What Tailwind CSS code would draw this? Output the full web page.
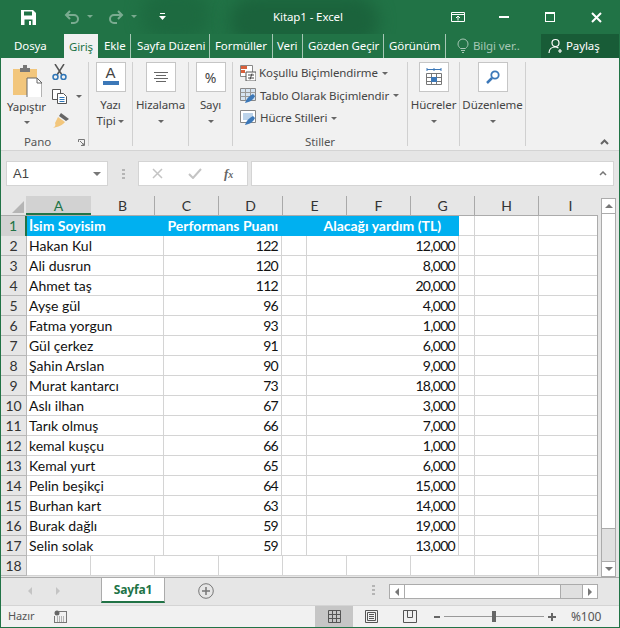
<!DOCTYPE html>
<html lang="tr">
<head>
<meta charset="UTF-8">
<title>Kitap1 - Excel</title>
<script src="https://cdn.jsdelivr.net/npm/@tailwindcss/browser@4"></script>
</head>
<body class="w-[620px] h-[628px] overflow-hidden bg-[#e6e6e6] font-['Noto_Sans',sans-serif] text-[11.500px] tracking-[-0.1px] text-[#444]">
<div class="h-[628px] flex flex-col border-x border-b border-[#217346]">

  <!-- title bar -->
  <header class="relative h-[34px] flex items-center bg-[#217346] text-white overflow-hidden">
    <div class="absolute left-[140px] top-[-10px] w-[70px] h-[50px] rounded-full bg-[#1d6a40] blur-sm"></div>
    <div class="absolute left-[228px] top-[-4px] w-[150px] h-[50px] rounded-full bg-[#1b633c] blur-sm"></div>
    <div class="relative w-[618px] flex items-center h-full">
      <svg class="ml-[20px]" width="15" height="15" viewBox="0 0 15 15"><path d="M0 0h12l3 3v12H0z" fill="#fff"/><path d="M3 1.500h8v4H3zM3.500 9.500h8V15h-8z" fill="#217346"/><path d="M8 11h2v4H8z" fill="#fff"/></svg>
      <svg class="ml-[28px] opacity-40" width="16" height="15" viewBox="0 0 16 15" fill="none" stroke="#fff" stroke-width="2"><path d="M6 1 2 5l4 4M2 5h8a4 4 0 0 1 0 8H7"/></svg>
      <svg class="ml-[7px] opacity-40" width="6" height="4" viewBox="0 0 6 4"><path d="M0 0h6L3 3z" fill="#fff"/></svg>
      <svg class="ml-[15px] opacity-40" width="16" height="15" viewBox="0 0 16 15" fill="none" stroke="#fff" stroke-width="2"><path d="m10 1 4 4-4 4M14 5H6a4 4 0 0 0 0 8h3"/></svg>
      <svg class="ml-[7px] opacity-40" width="6" height="4" viewBox="0 0 6 4"><path d="M0 0h6L3 3z" fill="#fff"/></svg>
      <svg class="ml-[22px]" width="7" height="8" viewBox="0 0 7 8"><path d="M1 0h5v1H1zM0 3h7L3.500 7z" fill="#fff"/></svg>
      <span class="ml-[107px] w-[90px] text-[#fff] whitespace-nowrap">Kitap1 - Excel</span>
      <svg class="ml-[88px]" width="14" height="12" viewBox="0 0 14 12" fill="none" stroke="#fff"><path d="M.5 1.500h13v9H.5zM.5 3.500h13"/><path d="M7 9.500V5.500M5 7l2-2 2 2"/></svg>
      <span class="ml-[34px] w-[10px] h-[2px] bg-white"></span>
      <span class="ml-[36px] w-[10px] h-[10px] border border-white border-t-2"></span>
      <svg class="ml-[36px]" width="11" height="11" viewBox="0 0 11 11" stroke="#fff" stroke-width="2"><path d="m1 1 9 9M10 1l-9 9"/></svg>
    </div>
  </header>

  <!-- ribbon tabs -->
  <nav class="h-[24px] flex items-stretch bg-[#217346] text-white whitespace-nowrap">
    <span class="ml-[13px] w-[50px] leading-[24px]">Dosya</span>
    <span class="w-[34px] bg-[#f1f1f1] text-[#217346] text-center leading-[25px]">Giriş</span>
    <span class="ml-[6px] w-[27px] leading-[24px] border-r border-[#a6c7b5]">Ekle</span>
    <span class="ml-[6px] w-[73px] leading-[24px] border-r border-[#a6c7b5]">Sayfa Düzeni</span>
    <span class="ml-[5px] w-[58px] leading-[24px] border-r border-[#a6c7b5]">Formüller</span>
    <span class="ml-[4px] w-[26px] leading-[24px] border-r border-[#a6c7b5]">Veri</span>
    <span class="ml-[5px] w-[76px] leading-[24px] border-r border-[#a6c7b5]">Gözden Geçir</span>
    <span class="ml-[5px] w-[57px] leading-[24px] border-r border-[#a6c7b5]">Görünüm</span>
    <svg class="ml-[11px] mt-[4px]" width="12" height="16" viewBox="0 0 12 16" fill="none" stroke="#a6c7b5"><path d="M3.500 10.500C2 9 1 8 1 6a5 5 0 0 1 10 0c0 2-1 3-2.500 4.500zM4 12.500h4M5 14.500h2"/></svg>
    <span class="ml-[4px] w-[68px] leading-[24px] text-[#a6c7b5]">Bilgi ver..</span>
    <span class="w-[78px] bg-[#185c37] flex items-center pl-[7px] gap-[2px]">
      <svg width="16" height="16" viewBox="0 0 16 16" fill="none" stroke="#fff" stroke-width="1.200"><circle cx="7.500" cy="5" r="3.500"/><path d="M1 15c0-4 3-6 6.500-6 1.500 0 2 .5 3 1M12 11v4M10 13h4"/></svg>
      Paylaş
    </span>
  </nav>

  <!-- ribbon -->
  <section class="h-[93px] flex items-stretch bg-[#f1f1f1] border-b border-[#d4d4d4] pt-[4px] pb-[4px] relative">
    <div class="w-[88px] flex flex-col border-r border-[#d0d0d0]">
      <div class="h-[73px] shrink-0 flex">
        <div class="w-[45px] ml-[3px] flex flex-col items-center">
          <svg class="mt-[3px]" width="30" height="32" viewBox="0 0 30 32"><path d="M1 4h24v26H1z" fill="#f2c67c"/><path d="M8 3h3V0h4v3h3v4H8z" fill="#777"/><path d="M15 13h10l5 5v15H15z" fill="#fff" stroke="#666"/><path d="M25 13v5h5" fill="none" stroke="#666"/></svg>
          <span class="mt-[2px] leading-[16px] whitespace-nowrap">Yapıştır</span>
          <span class="mt-[6px] border-x-[3px] border-t-[3px] border-x-transparent border-t-[#666]"></span>
        </div>
        <div class="flex flex-col gap-[9px] ml-[3px] pt-[2px]">
          <svg width="15" height="16" viewBox="0 0 15 16" fill="none"><path d="m3 0 7 11M12 0 5 11" stroke="#555" stroke-width="1.500"/><circle cx="3.500" cy="13" r="2.500" stroke="#2e75b6" stroke-width="1.500"/><circle cx="11.500" cy="13" r="2.500" stroke="#2e75b6" stroke-width="1.500"/></svg>
          <div class="flex items-center gap-[8px]">
            <svg width="16" height="15" viewBox="0 0 16 15" fill="#fff" stroke="#555"><path d="M.5.500h8v10h-8z"/><path d="M5.500 4.500h6l3 3v7h-9z"/><path d="M7.500 8.500h5M7.500 10.500h5M7.500 12.500h5" stroke="#2e75b6"/></svg>
            <span class="border-x-[3px] border-t-[3px] border-x-transparent border-t-[#666]"></span>
          </div>
          <svg width="17" height="15" viewBox="0 0 17 15"><path d="m9 0 8 6-3 2-7-5z" fill="#666"/><path d="M6 4 13 9c-2 3-7 5-12 6 2-1 3-3 2-5z" fill="#f2c67c"/></svg>
        </div>
      </div>
      <div class="flex items-center h-[14px] shrink-0">
        <span class="ml-[23px] w-[54px] text-[#555]">Pano</span>
        <svg width="7" height="7" viewBox="0 0 7 7" fill="none" stroke="#777"><path d="M.5 3V.5H6.500V6.500H3M2 2l4 4M4 6h2V4"/></svg>
      </div>
    </div>
    <div class="w-[44px] flex flex-col items-center border-r border-[#d0d0d0]">
      <div class="w-[30px] h-[30px] bg-white border border-[#c6c6c6] flex flex-col items-center pt-[2px]">
        <span class="font-['Liberation_Sans',sans-serif] text-[15px] leading-[16px] text-[#444]">A</span>
        <span class="w-[16px] h-[4px] bg-[#3c78b8]"></span>
      </div>
      <span class="mt-[5px] leading-[16px]">Yazı</span>
      <span class="leading-[16px] whitespace-nowrap">Tipi <span class="inline-block align-middle border-x-[3px] border-t-[3px] border-x-transparent border-t-[#666]"></span></span>
    </div>
    <div class="w-[56px] flex flex-col items-center border-r border-[#d0d0d0]">
      <div class="w-[30px] h-[30px] bg-white border border-[#c6c6c6] flex flex-col items-center justify-center gap-[2px]">
        <span class="w-[14px] h-px bg-[#666]"></span><span class="w-[10px] h-px bg-[#666]"></span><span class="w-[14px] h-px bg-[#666]"></span><span class="w-[10px] h-px bg-[#666]"></span>
      </div>
      <span class="mt-[5px] leading-[16px]">Hizalama</span>
      <span class="mt-[7px] border-x-[3px] border-t-[3px] border-x-transparent border-t-[#666]"></span>
    </div>
    <div class="w-[44px] flex flex-col items-center border-r border-[#d0d0d0]">
      <div class="w-[30px] h-[30px] bg-white border border-[#c6c6c6] flex items-center justify-center text-[14px] text-[#444]">%</div>
      <span class="mt-[5px] leading-[16px]">Sayı</span>
      <span class="mt-[7px] border-x-[3px] border-t-[3px] border-x-transparent border-t-[#666]"></span>
    </div>
    <div class="w-[175px] flex flex-col border-r border-[#d0d0d0]">
      <div class="pl-[7px] flex items-center gap-[3px] h-[22px] whitespace-nowrap">
        <svg width="16" height="16" viewBox="0 0 16 16"><path d="M.5.500h12v11H.5z" fill="#fff" stroke="#888"/><path d="M1 1h6v3H1z" fill="#d9603b"/><path d="M1 5h4v3H1z" fill="#d9603b"/><path d="M6 7h10v9H6z" fill="#fff" stroke="#555"/><path d="M8 10h6M8 13h6M12 8.500 10 14.500" stroke="#444" fill="none"/></svg>
        <span>Koşullu Biçimlendirme</span><span class="ml-[1px] border-x-[3px] border-t-[3px] border-x-transparent border-t-[#666]"></span>
      </div>
      <div class="pl-[7px] flex items-center gap-[3px] h-[23px] whitespace-nowrap">
        <svg width="17" height="16" viewBox="0 0 17 16"><path d="M.5.500h15v12H.5z" fill="#d5e3f1" stroke="#888"/><path d="M.5 4.500h15M.5 8.500h15M5.500.5v12M10.500.5v12" stroke="#999" fill="none"/><path d="M5 15c1-4 4-7 8-9l2 2c-2 4-5 6-10 7z" fill="#3c78b8"/></svg>
        <span>Tablo Olarak Biçimlendir</span><span class="ml-[1px] border-x-[3px] border-t-[3px] border-x-transparent border-t-[#666]"></span>
      </div>
      <div class="pl-[7px] flex items-center gap-[3px] h-[22px] whitespace-nowrap">
        <svg width="17" height="16" viewBox="0 0 17 16"><path d="M.5.500h15v12H.5z" fill="#fff" stroke="#888"/><path d="M3 3h10v7H3z" fill="#bcd3ea"/><path d="M5 15c1-4 4-7 8-9l2 2c-2 4-5 6-10 7z" fill="#3c78b8"/></svg>
        <span>Hücre Stilleri</span><span class="ml-[1px] border-x-[3px] border-t-[3px] border-x-transparent border-t-[#666]"></span>
      </div>
      <span class="mt-auto mb-[-3px] text-center leading-[14px] text-[#555]">Stiller</span>
    </div>
    <div class="w-[52px] flex flex-col items-center border-r border-[#d0d0d0]">
      <div class="w-[30px] h-[30px] bg-white border border-[#c6c6c6] flex items-center justify-center">
        <svg width="16" height="18" viewBox="0 0 16 18" fill="none"><path d="M1 1.500h14M1 0v3M15 0v3M8 0v3" stroke="#3c78b8"/><path d="M.5 5.500h15v11H.5zM.5 9.500h15M.5 13.500h15M5.500 5.500v11M10.500 5.500v11" stroke="#777"/><path d="M5 9h6v5H5z" fill="#3c78b8"/></svg>
      </div>
      <span class="mt-[5px] leading-[16px]">Hücreler</span>
      <span class="mt-[7px] border-x-[3px] border-t-[3px] border-x-transparent border-t-[#666]"></span>
    </div>
    <div class="w-[66px] flex flex-col items-center border-r border-[#d0d0d0]">
      <div class="w-[30px] h-[30px] bg-white border border-[#c6c6c6] flex items-center justify-center">
        <svg width="14" height="14" viewBox="0 0 14 14" fill="none" stroke="#3c78b8"><circle cx="9" cy="5" r="3.700" stroke-width="1.800"/><path d="m6 8-5 5" stroke-width="2.500"/></svg>
      </div>
      <span class="mt-[5px] leading-[16px]">Düzenleme</span>
      <span class="mt-[7px] border-x-[3px] border-t-[3px] border-x-transparent border-t-[#666]"></span>
    </div>
    <svg class="absolute right-[10px] bottom-[5px]" width="9" height="6" viewBox="0 0 9 6" fill="none" stroke="#666" stroke-width="2"><path d="m1 5 3.500-3.500L8 5"/></svg>
  </section>

  <!-- formula bar -->
  <div class="h-[45px] flex items-center pl-[5px] pr-[5px]">
    <div class="w-[102px] h-[25px] bg-white border border-[#d4d4d4] flex items-center justify-between pl-[6px] pr-[6px] font-['Liberation_Sans',sans-serif] tracking-normal text-[13px] text-[#444]">
      A1 <span class="border-x-[4px] border-t-[4px] border-x-transparent border-t-[#777]"></span>
    </div>
    <div class="ml-[14px] w-[3px] flex flex-col gap-[2px]"><span class="h-[2px] bg-[#b5b5b5]"></span><span class="h-[2px] bg-[#b5b5b5]"></span><span class="h-[2px] bg-[#b5b5b5]"></span></div>
    <div class="ml-[13px] w-[110px] h-[25px] bg-white border border-[#d4d4d4] flex items-center pl-[13px]">
      <svg width="11" height="11" viewBox="0 0 11 11" stroke="#c4c4c4" stroke-width="1.500"><path d="m1 1 9 9M10 1l-9 9"/></svg>
      <svg class="ml-[25px]" width="14" height="11" viewBox="0 0 14 11" fill="none" stroke="#c4c4c4" stroke-width="2"><path d="m1 6 4 4 8-9"/></svg>
      <span class="ml-[22px] font-['Liberation_Serif',serif] italic font-bold text-[13px] text-[#666]">f<span class="text-[10px]">x</span></span>
    </div>
    <div class="ml-[3px] flex-1 h-[25px] bg-white border border-[#d4d4d4] flex items-center justify-end pr-[6px]">
      <svg width="8" height="5" viewBox="0 0 8 5" fill="none" stroke="#777" stroke-width="1.500"><path d="m1 4 3-3 3 3"/></svg>
    </div>
  </div>

  <!-- sheet -->
  <div class="flex-1 relative flex flex-col font-['Lato',sans-serif] text-[14px] tracking-normal text-[#111] min-h-0">
    <div class="h-[19px] flex items-stretch text-center leading-[19px] text-[14px] text-[#333]">
      <span class="w-[25px] flex items-end justify-end pr-[2px] pb-[2px]"><svg width="12" height="12" viewBox="0 0 12 12"><path d="M12 0v12H0z" fill="#b5b5b5"/></svg></span>
      <span class="w-[65px] bg-[#d2d2d2] border-b-2 border-[#217346] text-[#217346]">A</span>
      <span class="w-[64px] border-r border-[#a9a9a9]">B</span>
      <span class="w-[64px] border-r border-[#a9a9a9]">C</span>
      <span class="w-[64px] border-r border-[#a9a9a9]">D</span>
      <span class="w-[64px] border-r border-[#a9a9a9]">E</span>
      <span class="w-[64px] border-r border-[#a9a9a9]">F</span>
      <span class="w-[64px] border-r border-[#a9a9a9]">G</span>
      <span class="w-[64px] border-r border-[#a9a9a9]">H</span>
      <span class="w-[59px] pl-[4px]">I</span>
    </div>
    <div id="grid" class="w-[597px] flex flex-col border-r border-[#ababab]"></div>
    <!-- scrollbar -->
    <div class="absolute right-[3px] top-[2px] w-[15px] h-[379px] flex flex-col bg-[#e0e0e0] border border-[#ababab]">
      <div class="h-[15px] bg-white flex items-center justify-center border-b border-[#ababab]"><span class="border-x-[4px] border-b-[4px] border-x-transparent border-b-[#777]"></span></div>
      <div class="h-[315px] bg-white border-b border-[#ababab]"></div>
      <div class="mt-auto h-[15px] bg-white flex items-center justify-center border-t border-[#ababab]"><span class="border-x-[4px] border-t-[4px] border-x-transparent border-t-[#777]"></span></div>
    </div>
  </div>

  <!-- sheet tabs -->
  <div class="h-[28px] flex border-t border-[#ababab] bg-[#e6e6e6]">
    <span class="ml-[27px] mt-[9px] w-0 h-0 border-y-[4px] border-r-[4px] border-y-transparent border-r-[#c4c4c4]"></span>
    <span class="ml-[24px] mt-[9px] w-0 h-0 border-y-[4px] border-l-[4px] border-y-transparent border-l-[#c4c4c4]"></span>
    <span class="ml-[41px] w-[64px] h-[25px] bg-white border-x border-[#ababab] border-b-[2px] border-b-[#217346] text-center font-bold text-[12px] text-[#217346] leading-[23px]">Sayfa1</span>
    <svg class="ml-[33px] mt-[5px]" width="16" height="16" viewBox="0 0 16 16" fill="none" stroke="#777"><circle cx="8" cy="8" r="7.300"/><path d="M8 4v8M4 8h8" stroke-width="1.500"/></svg>
    <div class="ml-[158px] mt-[7px] w-[3px] flex flex-col gap-[2px]"><span class="h-[2px] bg-[#b5b5b5]"></span><span class="h-[2px] bg-[#b5b5b5]"></span><span class="h-[2px] bg-[#b5b5b5]"></span></div>
    <div class="ml-[14px] mt-[6px] w-[209px] h-[15px] flex border border-[#ababab] bg-[#e0e0e0]">
      <span class="w-[15px] flex items-center justify-center bg-white border-r border-[#ababab]"><span class="border-y-[4px] border-r-[4px] border-y-transparent border-r-[#777]"></span></span>
      <span class="w-[156px] bg-white border-r border-[#ababab]"></span>
      <span class="ml-auto w-[15px] flex items-center justify-center bg-white border-l border-[#ababab]"><span class="border-y-[4px] border-l-[4px] border-y-transparent border-l-[#777]"></span></span>
    </div>
  </div>

  <!-- status bar -->
  <footer class="h-[22px] flex items-center bg-[#f1f1f1] border-t border-[#d4d4d4] text-[11px] text-[#555]">
    <span class="ml-[7px] w-[46px]">Hazır</span>
    <svg width="13" height="13" viewBox="0 0 13 13"><circle cx="3" cy="3" r="2.500" fill="#666"/><path d="M5 1h8v12H0V6h1v6h11V2H5z" fill="#777"/><path d="M3 7h8M3 9h8M3 11h8" stroke="#777" stroke-dasharray="1 1"/></svg>
    <div class="ml-[248px] w-[38px] h-[21px] bg-[#c6c6c6] flex items-center justify-center">
      <svg width="13" height="13" viewBox="0 0 13 13" fill="none" stroke="#555"><path d="M.5.500h12v12H.5zM.5 4.500h12M.5 8.500h12M4.500.5v12M8.500.5v12"/></svg>
    </div>
    <svg class="ml-[12px]" width="13" height="13" viewBox="0 0 13 13" fill="none" stroke="#555"><path d="M.5.500h12v12H.5zM2.500 2.500h8v8h-8zM4 4.500h5M4 6.500h5M4 8.500h5"/></svg>
    <svg class="ml-[25px]" width="14" height="13" viewBox="0 0 14 13" fill="none" stroke="#555"><path d="M.5.500h13v12H.5zM4.500.5v7h5v-7"/></svg>
    <span class="ml-[17px] w-[6px] h-[2px] bg-[#666]"></span>
    <div class="ml-[4px] w-[100px] h-[1px] bg-[#999] relative"><span class="absolute left-[48px] top-[-5px] w-[4px] h-[11px] bg-[#666]"></span></div>
    <svg class="ml-[4px]" width="8" height="8" viewBox="0 0 8 8" stroke="#666" stroke-width="2"><path d="M4 0v8M0 4h8"/></svg>
    <span class="ml-[15px] text-[12px]">%100</span>
  </footer>
</div>

<script>
  const rows = [
    ["Hakan Kul","122","12,000"],["Ali dusrun","120","8,000"],["Ahmet taş","112","20,000"],["Ayşe gül","96","4,000"],
    ["Fatma yorgun","93","1,000"],["Gül çerkez","91","6,000"],["Şahin Arslan","90","9,000"],["Murat kantarcı","73","18,000"],
    ["Aslı ilhan","67","3,000"],["Tarık olmuş","66","7,000"],["kemal kuşçu","66","1,000"],["Kemal yurt","65","6,000"],
    ["Pelin beşikçi","64","15,000"],["Burhan kart","63","14,000"],["Burak dağlı","59","19,000"],["Selin solak","59","13,000"]
  ];
  const head = 'w-[26px] shrink-0 bg-[#e6e6e6] border-r border-b border-[#b8b8b8] text-center text-[14px] text-[#333] leading-[19px]';
  let html = `<div class="h-[21px] flex border-t border-[#ababab]">
    <span class="w-[26px] shrink-0 bg-[#d2d2d2] border-r-2 border-[#217346] text-center text-[14px] text-[#217346] leading-[19px]">1</span>
    <div class="w-[432px] bg-[#00b0f0] text-white font-bold flex leading-[19px]">
      <span class="w-[137px] pl-[2px]">İsim Soyisim</span><span class="w-[118px] text-right pr-[4px] whitespace-nowrap">Performans Puanı</span><span class="w-[177px] text-right pr-[18px] whitespace-nowrap">Alacağı yardım (TL)</span>
    </div>
    <span class="w-[16px] bg-white border-r border-b border-[#d4d4d4]"></span><span class="w-[64px] bg-white border-r border-b border-[#d4d4d4]"></span><span class="flex-1 bg-white border-b border-[#d4d4d4]"></span>
  </div>`;
  rows.forEach((r, i) => {
    html += `<div class="h-[20px] flex bg-white leading-[19px]">
      <span class="${head}">${i + 2}</span>
      <span class="w-[137px] pl-[2px] border-r border-b border-[#d4d4d4]">${r[0]}</span>
      <span class="w-[118px] text-right pr-[3px] tracking-[-0.7px] border-r border-b border-[#d4d4d4]">${r[1]}</span>
      <span class="w-[25px] border-r border-b border-[#d4d4d4]"></span>
      <span class="w-[152px] text-right pr-[3px] tracking-[-0.7px] border-r border-b border-[#d4d4d4]">${r[2]}</span>
      <span class="w-[16px] border-r border-b border-[#d4d4d4]"></span>
      <span class="w-[64px] border-r border-b border-[#d4d4d4]"></span>
      <span class="flex-1 border-b border-[#d4d4d4]"></span>
    </div>`;
  });
  html += `<div class="h-[20px] flex bg-white"><span class="${head}">18</span>` +
    [1,2,3,4,5,6,7,8].map(() => '<span class="w-[64px] border-r border-b border-[#d4d4d4]"></span>').join('') +
    '<span class="flex-1 border-b border-[#d4d4d4]"></span></div>';
  document.getElementById('grid').innerHTML = html;
</script>
</body>
</html>
